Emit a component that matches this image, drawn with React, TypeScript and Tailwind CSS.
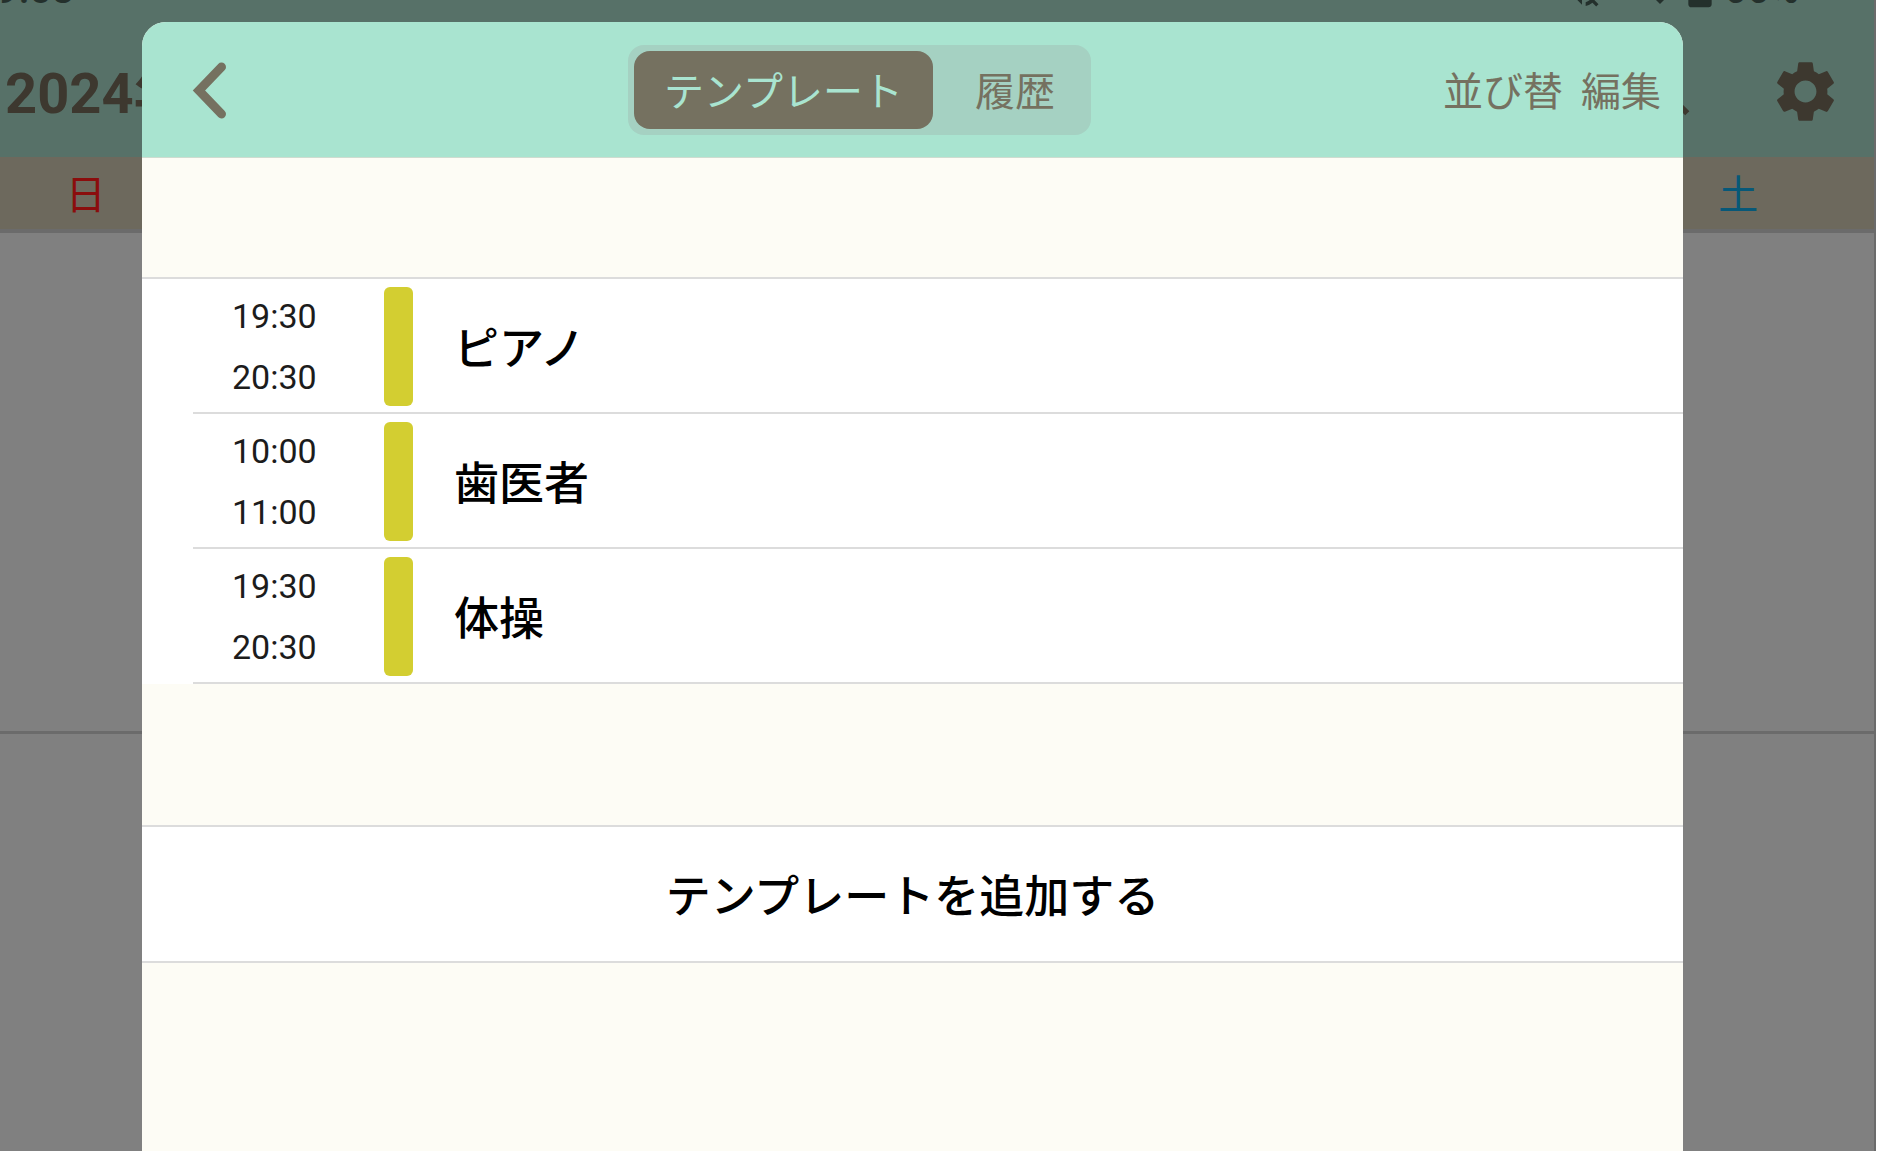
import { MdBatteryFull, MdSearch, MdSettings, MdVolumeOff, MdWifi } from "react-icons/md";

const templates = [
  { id: 1, start: "19:30", end: "20:30", title: "ピアノ" },
  { id: 2, start: "10:00", end: "11:00", title: "歯医者" },
  { id: 3, start: "19:30", end: "20:30", title: "体操" },
];

function CalendarBackdrop() {
  return (
    <div className="flex min-h-screen flex-col overflow-hidden border-r-2 border-[#6b6b6b] bg-[#808080]">
      <header className="relative h-[157px] overflow-hidden bg-[#577168] font-[Roboto,'Noto_Sans_CJK_JP',sans-serif] text-[#3d382f]">
        <div className="absolute -top-8 left-0 flex h-[44px] w-full items-center justify-between pr-[75px] text-[40px] font-medium text-[#24302c]">
          <span className="-ml-1">9:03</span>
          <div className="flex items-center">
            <MdVolumeOff className="mr-8 size-11" />
            <MdWifi className="-mr-3 mb-1 size-12" />
            <MdBatteryFull className="-mr-1 mb-3 size-14" />
            <span>66%</span>
          </div>
        </div>
        <div className="flex h-full items-center justify-between pt-[30px] pr-[32px] pl-[5px]">
          <h1 className="text-[56px] leading-none font-bold whitespace-nowrap">2024年</h1>
          <div className="flex items-center gap-[70px] pb-[4px]">
            <button type="button" aria-label="検索">
              <MdSearch className="size-[66px]" />
            </button>
            <button type="button" aria-label="設定">
              <MdSettings className="size-[73px]" />
            </button>
          </div>
        </div>
      </header>

      <div className="-mr-[2px] -ml-[52px] flex h-[76px] items-center justify-between border-b-4 border-[#6b6b6b] bg-[#6d695d] pb-[2px] text-[40px] leading-none">
        <span className="w-1/7 text-center text-[#8b0d0d]">日</span>
        <span className="w-1/7 text-center text-[#075878]">土</span>
      </div>
      <div className="h-[501px] border-b-3 border-[#6b6b6b]" />
      <div className="flex-1" />
    </div>
  );
}

function SheetHeader() {
  return (
    <header className="flex h-[136px] items-center justify-between border-b border-[#cfdcd0] bg-[#a9e4d0] pr-[22px] text-[40px] leading-none text-[#757160]">
      <button type="button" aria-label="戻る" className="w-[134px] pl-[48px]">
        <svg viewBox="0 0 40 60" className="h-[60px] w-[40px]" fill="none">
          <path
            d="M31.500 7 L9 30.500 L31.500 54"
            stroke="currentColor"
            strokeWidth="9"
            strokeLinecap="round"
          />
        </svg>
      </button>

      <div className="flex h-[90px] gap-3 rounded-2xl bg-[#a5d1c2] p-[6px]">
        <button type="button" aria-pressed="true" className="rounded-2xl bg-[#757160] px-[30px] pb-[2px] text-[#a9e4d0]">
          テンプレート
        </button>
        <button type="button" aria-pressed="false" className="rounded-2xl px-[30px] pb-[2px]">
          履歴
        </button>
      </div>

      <div className="flex gap-[18px] pb-[2px]">
        <button type="button">並び替</button>
        <button type="button">編集</button>
      </div>
    </header>
  );
}

export default function App() {
  return (
    <div className="relative min-h-screen bg-white pr-[24px] font-['Noto_Sans_CJK_JP',sans-serif]">
      <CalendarBackdrop />

      <div className="absolute inset-0 flex pt-[22px] pr-[217px] pl-[142px]">
        <main className="flex-1 overflow-hidden rounded-t-3xl bg-[#fdfcf5] text-black">
          <SheetHeader />

          <ul className="mt-[119px] border-t-2 border-[#dcdcdc] bg-white pl-[51px]">
            {templates.map((t) => (
              <li key={t.id} className="flex h-[135px] items-center border-b-2 border-[#dcdcdc] pt-[2px] pl-[39px]">
                <div className="w-[152px] font-[Roboto,sans-serif] text-[34px] leading-[61px] text-[#1c1c1c]">
                  <div>{t.start}</div>
                  <div>{t.end}</div>
                </div>
                <div className="h-[119px] w-[29px] rounded-md bg-[#d3ce31]" />
                <span className="ml-[41px] pb-[2px] text-[45px] leading-none font-medium">{t.title}</span>
              </li>
            ))}
          </ul>

          <button
            type="button"
            className="mt-[141px] h-[138px] w-full border-y-2 border-[#dcdcdc] bg-white pb-[2px] text-[45px] leading-none font-medium"
          >
            テンプレートを追加する
          </button>
        </main>
      </div>
    </div>
  );
}
